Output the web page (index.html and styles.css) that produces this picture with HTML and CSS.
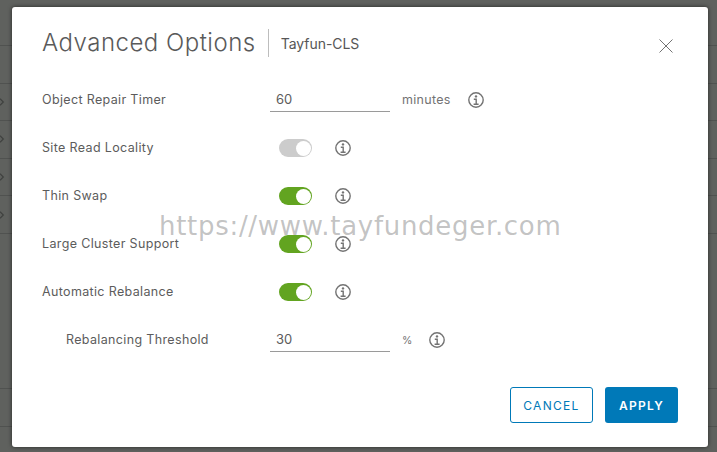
FILE: index.html
```html
<!DOCTYPE html>
<html lang="en">
<head>
<meta charset="utf-8">
<title>Advanced Options</title>
<link rel="stylesheet" href="styles.css">
</head>
<body>
<div class="backdrop">
  <div class="bg-rows">
    <div class="bg-row first"></div>
    <div class="bg-row"></div>
    <div class="bg-row"><svg class="chev" viewBox="0 0 6 10"><path d="M0 1l4 4-4 4"/></svg></div>
    <div class="bg-row"><svg class="chev" viewBox="0 0 6 10"><path d="M0 1l4 4-4 4"/></svg></div>
    <div class="bg-row"><svg class="chev" viewBox="0 0 6 10"><path d="M0 1l4 4-4 4"/></svg></div>
    <div class="bg-row"><svg class="chev" viewBox="0 0 6 10"><path d="M0 1l4 4-4 4"/></svg></div>
    <div class="bg-row tall"></div>
    <div class="bg-row"></div>
  </div>
  <section class="modal">
    <header class="head">
      <h1 class="title">Advanced Options</h1>
      <span class="subtitle">Tayfun-CLS</span>
      <svg class="close" viewBox="0 0 14 14"><path d="M.5.5l13 13M13.500.5l-13 13"/></svg>
    </header>
    <div class="form">
      <div class="row">
        <span class="label">Object Repair Timer</span>
        <span class="field">60</span>
        <span class="unit">minutes</span>
        <svg class="info" viewBox="0 0 16 16"><circle cx="8" cy="8" r="7.200"/><circle class="dot" cx="8" cy="4.400" r="1.200"/><path d="M5.800 7.200h2.400v4.800M5.600 12.200h5"/></svg>
      </div>
      <div class="row">
        <span class="label">Site Read Locality</span>
        <span class="toggle off"><span class="knob"></span></span>
        <svg class="info" viewBox="0 0 16 16"><circle cx="8" cy="8" r="7.200"/><circle class="dot" cx="8" cy="4.400" r="1.200"/><path d="M5.800 7.200h2.400v4.800M5.600 12.200h5"/></svg>
      </div>
      <div class="row">
        <span class="label">Thin Swap</span>
        <span class="toggle"><span class="knob"></span></span>
        <svg class="info" viewBox="0 0 16 16"><circle cx="8" cy="8" r="7.200"/><circle class="dot" cx="8" cy="4.400" r="1.200"/><path d="M5.800 7.200h2.400v4.800M5.600 12.200h5"/></svg>
      </div>
      <div class="row">
        <span class="label">Large Cluster Support</span>
        <span class="toggle"><span class="knob"></span></span>
        <svg class="info" viewBox="0 0 16 16"><circle cx="8" cy="8" r="7.200"/><circle class="dot" cx="8" cy="4.400" r="1.200"/><path d="M5.800 7.200h2.400v4.800M5.600 12.200h5"/></svg>
      </div>
      <div class="row">
        <span class="label">Automatic Rebalance</span>
        <span class="toggle"><span class="knob"></span></span>
        <svg class="info" viewBox="0 0 16 16"><circle cx="8" cy="8" r="7.200"/><circle class="dot" cx="8" cy="4.400" r="1.200"/><path d="M5.800 7.200h2.400v4.800M5.600 12.200h5"/></svg>
      </div>
      <div class="row">
        <span class="label sub">Rebalancing Threshold</span>
        <span class="field">30</span>
        <span class="unit pct">%</span>
        <svg class="info" viewBox="0 0 16 16"><circle cx="8" cy="8" r="7.200"/><circle class="dot" cx="8" cy="4.400" r="1.200"/><path d="M5.800 7.200h2.400v4.800M5.600 12.200h5"/></svg>
      </div>
    </div>
    <footer class="foot">
      <span class="btn ghost">CANCEL</span>
      <span class="btn solid">APPLY</span>
    </footer>
    <div class="watermark">https://www.tayfundeger.com</div>
  </section>
</div>
</body>
</html>
```

FILE: styles.css
```css
* { box-sizing: border-box; }
html, body { margin: 0; height: 100%; }
body { font-family: "Inter", "Liberation Sans", sans-serif; overflow: hidden; }
.backdrop { position: relative; width: 717px; height: 452px; background: #5f615e; padding: 7px 9px 5px 12px; }
.bg-rows { position: absolute; inset: 0; }
.bg-row { height: 37.600px; border-bottom: 1px solid #505250; display: flex; align-items: center; }
.bg-row.first { height: 46px; }
.bg-row.tall { height: 155px; }
.chev { width: 5px; height: 10px; fill: none; stroke: #3f413f; stroke-width: 1.400; }
.modal { position: relative; width: 696px; height: 440px; background: #fff; border-radius: 3px; box-shadow: 0 0 4px rgba(0,0,0,.6); padding: 20px 30px 24px; display: flex; flex-direction: column; }
.head { display: flex; align-items: center; height: 32px; }
.title { margin: 0; font-size: 24px; font-weight: 300; color: #5a5a5a; letter-spacing: .5px; line-height: 32px; padding-right: 12px; border-right: 1px solid #bdbdbd; height: 28px; display: flex; align-items: center; }
.subtitle { margin-left: 12px; font-size: 14px; letter-spacing: -.05px; color: #565656; }
.close { width: 14px; height: 14px; margin-left: auto; margin-right: 5px; margin-top: 5px; fill: none; stroke: #737373; stroke-width: 1; }
.form { margin-top: 25px; display: flex; flex-direction: column; gap: 16px; }
.row { display: flex; align-items: center; height: 32px; font-size: 12.500px; color: #5c5c5c; }
.label { width: 228px; letter-spacing: .35px; padding-bottom: 2px; }
.label.sub { padding-left: 24px; }
.field { width: 120px; height: 24px; border-bottom: 1px solid #9a9a9a; padding: 1px 6px 0; line-height: 20px; font-size: 13px; }
.unit { margin-left: 12px; color: #737373; letter-spacing: .3px; padding-bottom: 2px; }
.unit.pct { font-size: 10.500px; letter-spacing: 0; padding-bottom: 0; }
.unit + .info { margin-left: 17px; }
.toggle { margin-left: 9px; width: 33px; height: 18px; border-radius: 9px; background: #62a420; position: relative; }
.toggle.off { background: #cccccc; }
.knob { position: absolute; top: 1.500px; right: 1.500px; width: 15px; height: 15px; border-radius: 50%; background: #fff; }
.toggle + .info { margin-left: 23px; }
.info { width: 16px; height: 16px; fill: none; stroke: #737373; stroke-width: 1.400; }
.info .dot { fill: #737373; stroke: none; }
.foot { margin-top: auto; display: flex; justify-content: flex-end; gap: 12px; }
.btn { height: 36px; border-radius: 3px; display: flex; align-items: center; justify-content: center; font-size: 12px; letter-spacing: 1.300px; }
.ghost { width: 83px; border: 1px solid #0079b8; color: #0079b8; }
.solid { width: 73px; background: #0079b8; color: #fff; font-weight: 600; }
.watermark { position: absolute; left: 147px; top: 202px; font-family: "DejaVu Sans", sans-serif; font-size: 26px; letter-spacing: .7px; line-height: 34px; color: rgba(110,110,110,.42); white-space: nowrap; }
```
